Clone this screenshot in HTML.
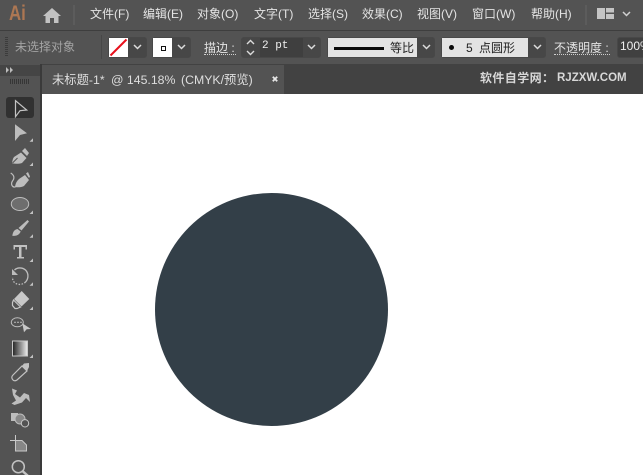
<!DOCTYPE html>
<html>
<head>
<meta charset="utf-8">
<style>
html,body{margin:0;padding:0;width:643px;height:475px;overflow:hidden;background:#fff}
body{position:relative;font-family:"Liberation Sans","Noto Sans CJK SC",sans-serif}
.a{position:absolute}
.t{position:absolute;white-space:nowrap;font-size:12px;line-height:14px;color:#e4e4e4}
.box{position:absolute;box-sizing:border-box;border:1px solid #484848;border-radius:3px;background:#474747}
.ul{position:absolute;height:0;border-bottom:1px dotted #cfcfcf}
svg{position:absolute;overflow:visible}
</style>
</head>
<body>
<!-- backgrounds -->
<div class="a" style="left:0;top:0;width:643px;height:30px;background:#535353"></div>
<div class="a" style="left:0;top:30px;width:643px;height:1px;background:#3e3e3e"></div>
<div class="a" style="left:0;top:31px;width:643px;height:33px;background:#535353"></div>
<div class="a" style="left:0;top:64px;width:643px;height:30px;background:#424242"></div>
<div class="a" style="left:0;top:64px;width:40px;height:411px;background:#535353"></div>
<div class="a" style="left:0;top:65px;width:40px;height:11px;background:#454545"></div>
<div class="a" style="left:40px;top:64px;width:2px;height:411px;background:#3a3a3a"></div>
<div class="a" style="left:42px;top:65px;width:242px;height:29px;background:#535353"></div>
<div class="a" style="left:42px;top:94px;width:601px;height:381px;background:#fff"></div>
<div class="a" style="left:155px;top:193px;width:233px;height:233px;border-radius:50%;background:#333f48"></div>

<!-- menu bar -->
<div class="t" style="left:9px;top:1px;font-size:21px;line-height:26px;font-weight:bold;color:#ad7753;transform:scaleX(.8);transform-origin:left">Ai</div>
<svg style="left:43px;top:8px" width="18" height="15" viewBox="0 0 18 15"><path d="M9 0 L0 8 H2.500 V15 H7 V10 H11 V15 H15.500 V8 H18 Z" fill="#c2c2c2"/></svg>
<div class="a" style="left:73px;top:5px;width:2px;height:20px;background:#5c5c5c"></div>
<div class="t" style="left:90px;top:7px">文件(F)</div>
<div class="t" style="left:143px;top:7px">编辑(E)</div>
<div class="t" style="left:197px;top:7px">对象(O)</div>
<div class="t" style="left:254px;top:7px">文字(T)</div>
<div class="t" style="left:308px;top:7px">选择(S)</div>
<div class="t" style="left:362px;top:7px">效果(C)</div>
<div class="t" style="left:417px;top:7px">视图(V)</div>
<div class="t" style="left:472px;top:7px">窗口(W)</div>
<div class="t" style="left:531px;top:7px">帮助(H)</div>
<div class="a" style="left:585px;top:5px;width:2px;height:20px;background:#5c5c5c"></div>
<svg style="left:597px;top:8px" width="17" height="11"><path d="M0 0H8V11H0Z M9 0H17V4.500H9Z M9 6H17V11H9Z" fill="#c4c4c4"/></svg>
<svg style="left:622px;top:11px" width="10" height="6"><path d="M1 1L4.500 4.500L8 1" stroke="#d0d0d0" stroke-width="1.500" fill="none"/></svg>

<!-- control bar -->
<div class="a" style="left:5px;top:37px;width:3px;height:20px;background:repeating-linear-gradient(#3c3c3c 0 1px,#535353 1px 2px)"></div>
<div class="a" style="left:101px;top:35px;width:1px;height:24px;background:#474747"></div>
<div class="t" style="left:15px;top:40px;color:#a4a4a4">未选择对象</div>

<div class="box" style="left:108px;top:37px;width:39px;height:21px"></div>
<div class="a" style="left:109px;top:38px;width:19px;height:19px;background:#fff"></div>
<svg style="left:109px;top:38px" width="19" height="19"><path d="M1.500 17.500L17.500 1.500" stroke="#e8101c" stroke-width="2"/></svg>
<svg style="left:133px;top:44px" width="10" height="6"><path d="M1 1L4.500 4.500L8 1" stroke="#dcdcdc" stroke-width="1.500" fill="none"/></svg>

<div class="box" style="left:152px;top:37px;width:39px;height:21px"></div>
<div class="a" style="left:153px;top:38px;width:19px;height:19px;background:#fff"></div>
<div class="a" style="left:160px;top:45px;width:3px;height:3px;border:1px solid #111;margin:1px"></div>
<svg style="left:177px;top:44px" width="10" height="6"><path d="M1 1L4.500 4.500L8 1" stroke="#dcdcdc" stroke-width="1.500" fill="none"/></svg>

<div class="t" style="left:204px;top:41px">描边 :</div>
<div class="ul" style="left:204px;top:54px;width:32px"></div>

<div class="box" style="left:241px;top:37px;width:80px;height:21px"></div>
<div class="a" style="left:260px;top:38px;width:43px;height:19px;background:#3f3f3f"></div>
<svg style="left:246px;top:39px" width="10" height="17"><path d="M1 5L4.500 1.500L8 5M1 12L4.500 15.500L8 12" stroke="#dcdcdc" stroke-width="1.400" fill="none"/></svg>
<div class="t" style="left:262px;top:39px;font-family:'Liberation Mono',monospace;font-size:11px;color:#f0f0f0">2 pt</div>
<svg style="left:307px;top:44px" width="10" height="6"><path d="M1 1L4.500 4.500L8 1" stroke="#dcdcdc" stroke-width="1.500" fill="none"/></svg>

<div class="box" style="left:327px;top:37px;width:108px;height:21px"></div>
<div class="a" style="left:328px;top:38px;width:89px;height:19px;background:#e3e3e3"></div>
<div class="a" style="left:334px;top:47px;width:50px;height:3px;background:#0a0a0a"></div>
<div class="t" style="left:390px;top:41px;color:#222">等比</div>
<svg style="left:422px;top:44px" width="10" height="6"><path d="M1 1L4.500 4.500L8 1" stroke="#dcdcdc" stroke-width="1.500" fill="none"/></svg>

<div class="box" style="left:441px;top:37px;width:105px;height:21px"></div>
<div class="a" style="left:442px;top:38px;width:86px;height:19px;background:#e3e3e3"></div>
<div class="a" style="left:448.500px;top:45px;width:5px;height:5px;border-radius:50%;background:#0a0a0a"></div>
<div class="t" style="left:466px;top:41px;color:#222;word-spacing:3px">5 点圆形</div>
<svg style="left:533px;top:44px" width="10" height="6"><path d="M1 1L4.500 4.500L8 1" stroke="#dcdcdc" stroke-width="1.500" fill="none"/></svg>

<div class="t" style="left:554px;top:41px">不透明度 :</div>
<div class="ul" style="left:554px;top:54px;width:56px"></div>
<div class="box" style="left:617px;top:37px;width:40px;height:21px;background:#404040"></div>
<div class="t" style="left:620px;top:39px;font-size:12px;color:#f0f0f0">100%</div>

<!-- tab row -->
<div class="t" style="left:52px;top:73px;color:#dedede;font-size:12.300px">未标题-1*</div>
<div class="t" style="left:111px;top:73px;color:#dedede;font-size:12.300px">@ 145.18%</div>
<div class="t" style="left:181px;top:73px;color:#dedede;font-size:12.300px">(CMYK/预览)</div>
<svg style="left:271.500px;top:76px" width="6" height="6"><path d="M.8 .8L5.200 5.200M5.200 .8L.8 5.200" stroke="#e8e8e8" stroke-width="1.800"/></svg>
<div class="t" style="left:480px;top:71px;font-weight:bold;color:#d8d8d8;letter-spacing:.4px">软件自学网：</div>
<div class="t" style="left:557px;top:71px;font-weight:bold;color:#d8d8d8;font-size:11.500px">RJZXW.COM</div>

<!-- tool panel header -->
<svg style="left:6px;top:67px" width="8" height="6"><path d="M0 0L3 3L0 6ZM4 0L7 3L4 6Z" fill="#bcbcbc"/></svg>
<div class="a" style="left:10px;top:79px;width:19px;height:5px;background:repeating-linear-gradient(90deg,#363636 0 1px,#535353 1px 2px)"></div>

<!-- tools -->
<div class="a" style="left:6px;top:97px;width:28px;height:21px;border-radius:3px;background:#313131"></div>
<svg style="left:0;top:90px" width="40" height="385" viewBox="0 0 40 385">
  <!-- selection -->
  <path d="M15.500 10.700V26.700L20 20.700L26.700 20Z" fill="none" stroke="#c4c4c4" stroke-width="1.200"/>
  <!-- direct selection -->
  <path d="M15 34.300V51L20 45L27 43.300Z" fill="#bdbdbd"/>
  <!-- pen -->
  <path d="M12 73.300C12.500 70 13 68.500 14 67L21 62.500L26.500 68L22 73C19 74 15 74 12 73.300Z" fill="#bdbdbd"/>
  <path d="M12.500 73L17.500 68" stroke="#535353" stroke-width="1"/>
  <path d="M22 61L25 58L29 63L27 66Z" fill="#bdbdbd"/>
  <!-- curvature pen -->
  <path d="M15 97C15.500 93 17 91 19 89L25 85L29 90L24 96C21 97.500 18 97.500 15 97Z" fill="#bdbdbd"/>
  <path d="M26 83.500L28 82L30 86.500L29 88Z" fill="#bdbdbd"/>
  <path d="M10.700 83C14 85 15 88 12.500 91C10.500 94 12 97.500 15.500 97" fill="none" stroke="#bdbdbd" stroke-width="1.200"/>
  <!-- ellipse -->
  <ellipse cx="20" cy="114" rx="8.700" ry="6.500" fill="#6e6e6e" stroke="#bdbdbd" stroke-width="1"/>
  <!-- brush -->
  <path d="M12.300 145.700C13 141 15 139.500 17.500 139L20.700 141.500C19.500 144.500 16.500 146.500 12.300 145.700Z" fill="#bdbdbd"/>
  <path d="M18.500 138L27.500 130L29 131.500L21.500 140.500Z" fill="#bdbdbd"/>
  <!-- type -->
  <path d="M13.500 155H27V159.500H25.500V157H21.500V167H24V168.500H17V167H19V157H15V159.500H13.500Z" fill="#c2c2c2"/>
  <!-- rotate -->
  <path d="M14.500 180C17 177.500 22 177 25.500 180C29 183.500 28.500 189 25.500 192" fill="none" stroke="#bdbdbd" stroke-width="1.300"/>
  <path d="M25.500 192C22 195.500 16.500 195 14 192C12.800 190.500 12.500 189 12.500 187" fill="none" stroke="#bdbdbd" stroke-width="1.300" stroke-dasharray="1.500 1.500"/>
  <path d="M12 179V185H18Z" fill="#bdbdbd"/>
  <!-- eraser -->
  <path d="M21.700 201L29.300 209L21.500 216.500L14 209Z" fill="#c8c8c8"/>
  <path d="M13.500 210L20.500 217L17 218.500H15L12.500 215.500V212.500Z" fill="none" stroke="#c8c8c8" stroke-width="1.200"/>
  <!-- shape builder -->
  <ellipse cx="17.300" cy="232.300" rx="6" ry="4.500" fill="none" stroke="#bdbdbd" stroke-width="1"/>
  <circle cx="15" cy="232.300" r=".7" fill="#ddd"/><circle cx="18" cy="232.300" r=".7" fill="#ddd"/><circle cx="21" cy="232.300" r=".7" fill="#ddd"/>
  <path d="M22.300 233.300L31 239L26.700 239.300L24 242.300Z" fill="#c8c8c8"/>
  <!-- gradient -->
  <defs><linearGradient id="g"><stop offset="0" stop-color="#222"/><stop offset="1" stop-color="#eee"/></linearGradient></defs>
  <rect x="12.500" y="251" width="15" height="15" fill="url(#g)" stroke="#c8c8c8" stroke-width="1"/>
  <!-- eyedropper -->
  <path d="M13 290C11 288 12 286 13 285L22 276L27 281L17 290C15.500 291 14 291 13 290Z" fill="none" stroke="#c2c2c2" stroke-width="1.200"/>
  <path d="M22 276L24 273.500L29 273L29 277L27 281Z" fill="#c2c2c2"/>
  <!-- puppet warp -->
  <path d="M12 298.500L17 300.500L15 304L20 307.500L24 303L29 305L30 312L26 308L22 312.500L14.500 315L11.500 313.500L16 310.500L13 305Z" fill="#bdbdbd"/>
  <!-- symbol sprayer -->
  <rect x="11" y="323" width="7" height="8" fill="#bdbdbd"/>
  <circle cx="20" cy="329" r="5" fill="#888" stroke="#bdbdbd" stroke-width="1"/>
  <circle cx="25" cy="333.300" r="3.700" fill="#535353" stroke="#c8c8c8" stroke-width="1"/>
  <!-- artboard -->
  <path d="M10 350.500H15M15.500 345V350" stroke="#c8c8c8" stroke-width="1" fill="none"/>
  <path d="M15.500 350.500H22L26.500 355V361H15.500Z" fill="#868686" stroke="#c8c8c8" stroke-width="1"/>
  <!-- zoom -->
  <circle cx="18.300" cy="376.700" r="6" fill="none" stroke="#c2c2c2" stroke-width="1.500"/>
  <path d="M22.500 381L28 386" stroke="#c2c2c2" stroke-width="2.500"/>
  <!-- corner triangles -->
  <path d="M33 48.200v3.500h-3.500zM33 72.500v3.500h-3.500zM33 120.500v3.500h-3.500zM33 144.200v3.500h-3.500zM33 168.500v3.500h-3.500zM33 192.200v3.500h-3.500zM33 216.500v3.500h-3.500zM33 264.500v3.500h-3.500z" fill="#c2c2c2"/>
</svg>
</body>
</html>
